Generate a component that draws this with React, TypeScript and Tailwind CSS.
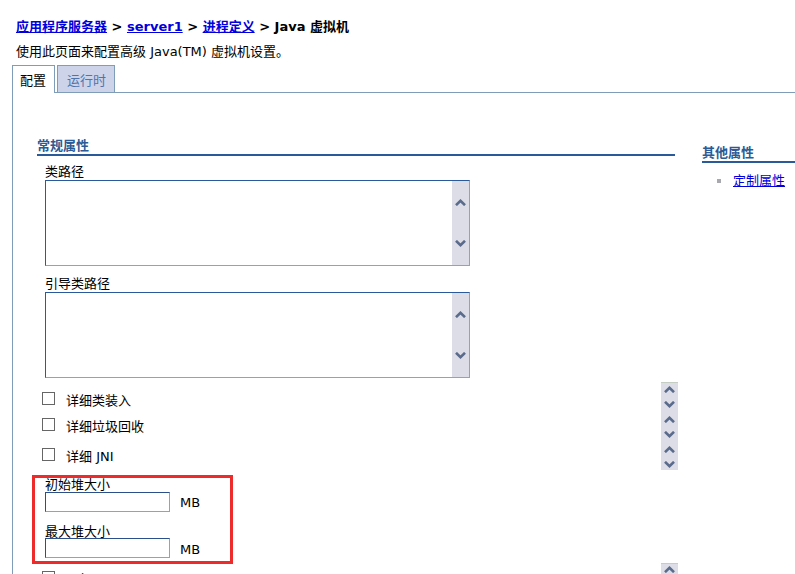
import React from "react";

const FONT = '"DejaVu Sans", "Noto Sans CJK SC", sans-serif';

function Chevron({ dir }: { dir: "up" | "down" }) {
  return (
    <svg width="11" height="7" viewBox="0 0 11 7">
      <polyline
        points={dir === "up" ? "1,6.2 5.5,1.8 10,6.2" : "1,0.8 5.5,5.2 10,0.8"}
        fill="none"
        stroke="#5a6b8b"
        strokeWidth="2.6"
      />
    </svg>
  );
}

function TextArea() {
  return (
    <div className="ml-2 flex h-[86px] w-[425px] border-t border-l border-t-[#2b5a9c] border-l-[#2b5a9c] border-r border-b border-r-[#8aa4c8] border-b-[#8aa4c8] bg-white">
      <div className="flex-1" />
      <div className="flex w-[17px] flex-col items-center justify-between bg-[#dcdde6] py-[18px]">
        <Chevron dir="up" />
        <Chevron dir="down" />
      </div>
    </div>
  );
}

function Check({ label, className = "" }: { label: string; className?: string }) {
  return (
    <div className={`flex items-start pl-[5px] leading-[16px] ${className}`}>
      <span className="mt-[1px] h-[13px] w-[13px] border border-[#666] bg-white" />
      <span className="ml-[11px] pt-[2px]">{label}</span>
    </div>
  );
}

function SizeField({ label, className = "" }: { label: string; className?: string }) {
  return (
    <div className={className}>
      <div className="pl-[10px] leading-[13px]">{label}</div>
      <div className="flex items-center pl-[10px]">
        <span className="h-[20px] w-[125px] border-t border-l border-t-[#2b4f8a] border-l-[#2b4f8a] border-r border-b border-r-[#8aa4c8] border-b-[#8aa4c8] bg-white" />
        <span className="ml-[10px] pt-[2px]">MB</span>
      </div>
    </div>
  );
}

export default function App() {
  return (
    <div
      className="h-[574px] w-[795px] overflow-hidden bg-white pl-3 pt-[19px] text-[13px] text-black"
      style={{ fontFamily: FONT }}
    >
      <div className="pl-1 font-bold leading-[16px]">
        <a className="text-[#0000dd] underline">应用程序服务器</a>
        {" > "}
        <a className="text-[#0000dd] underline">server1</a>
        {" > "}
        <a className="text-[#0000dd] underline">进程定义</a>
        {" > Java 虚拟机"}
      </div>
      <div className="mt-[9px] pl-1 leading-[16px]">使用此页面来配置高级 Java(TM) 虚拟机设置。</div>

      {/* tabs */}
      <div className="mt-[5px] flex h-[28px]">
        <div className="w-[43px] border-l border-t border-r border-[#7f9db9] bg-white pl-[7px] pt-[7px] leading-[16px]">
          配置
        </div>
        <div className="w-[2px] border-b border-[#7f9db9]" />
        <div className="w-[58px] border border-[#7f9db9] bg-[#cdd4ea] pl-[9px] pt-[7px] leading-[16px] text-[#4f73ab]">
          运行时
        </div>
        <div className="flex-1 border-b border-[#7f9db9]" />
      </div>

      {/* panel */}
      <div className="flex h-[500px] border-l border-[#7f9db9] pl-[24px] pt-[45px]">
        <div className="w-[641px] shrink-0">
          <div className="w-[638px] border-b-2 border-[#2a5a9a] font-bold leading-[16px] text-[#2c5a95]">
            常规属性
          </div>

          <div className="mt-[8px] pl-2 leading-[16px]">类路径</div>
          <TextArea />
          <div className="mt-[10px] pl-2 leading-[16px]">引导类路径</div>
          <TextArea />

          <div className="mt-[4px] flex h-[88px] justify-between">
            <div className="pt-[9px]">
              <Check label="详细类装入" />
              <Check label="详细垃圾回收" className="mt-[8px]" />
              <Check label="详细 JNI" className="mt-[12px]" />
            </div>
            <div className="flex h-[88px] w-[17px] flex-col items-center gap-[8px] border-t border-[#c4ccc4] bg-[#dcdde6] pt-[3px]">
              <Chevron dir="up" />
              <Chevron dir="down" />
              <Chevron dir="up" />
              <Chevron dir="down" />
              <Chevron dir="up" />
              <Chevron dir="down" />
            </div>
          </div>

          <div className="-ml-[5px] mt-[5px] h-[89px] w-[201px] border-[3px] border-[#ee2b2b]">
            <SizeField label="初始堆大小" />
            <SizeField label="最大堆大小" className="mt-[12px]" />
          </div>

          <div className="-mt-[1px] flex justify-between">
            <div className="pt-[7px]">
              <Check label="运行 HProf" />
            </div>
            <div className="flex h-[20px] w-[17px] flex-col items-center border-t border-[#c4ccc4] bg-[#dcdde6] pt-[2px]">
              <Chevron dir="up" />
            </div>
          </div>
        </div>

        <div className="ml-[24px] mt-[7px] flex-1">
          <div className="border-b-2 border-[#2a5a9a] font-bold leading-[16px] text-[#2c5a95]">其他属性</div>
          <div className="mt-[10px] flex items-center leading-[16px]">
            <span className="ml-[15px] h-[4px] w-[4px] bg-[#a8a8b0]" />
            <a className="ml-[12px] text-[#0000dd] underline">定制属性</a>
          </div>
        </div>
      </div>
    </div>
  );
}
